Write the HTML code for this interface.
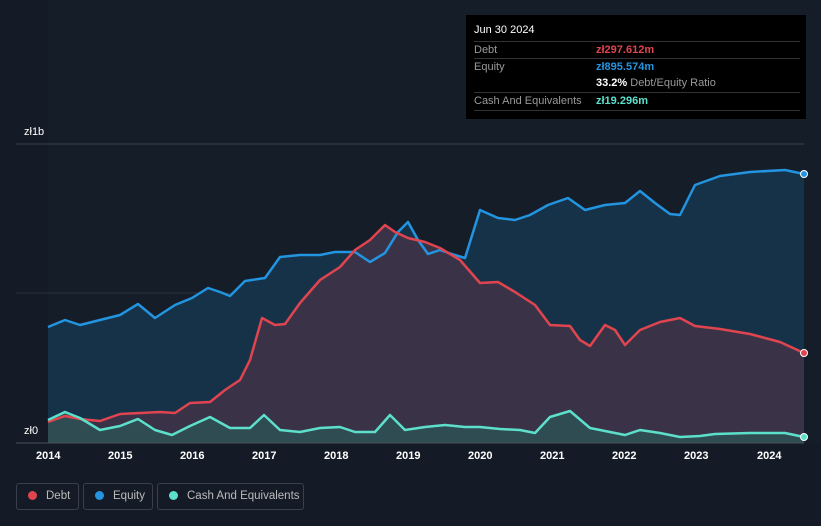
<!DOCTYPE html>
<html><head><meta charset="utf-8"><style>
html,body{margin:0;background:#151b26;font-family:"Liberation Sans",sans-serif;width:821px;height:526px;overflow:hidden;position:relative}
.tt{position:absolute;left:466px;top:15px;width:340px;height:104px;background:#000;color:#fff;font-size:11px}
.row{position:absolute;left:8px;width:326px;border-top:1px solid #333;height:17px;line-height:17px}
.lb{color:#9a9a9a;position:absolute;left:0}
.v{position:absolute;left:122px;font-weight:bold}
.leg{position:absolute;top:483px;height:27px;border:1px solid #3a404b;border-radius:3px;color:#bbb;font-size:11.5px;line-height:25px;box-sizing:border-box;white-space:nowrap;overflow:hidden}
.dot{display:inline-block;width:9px;height:9px;border-radius:50%;margin:0 9px 0 11px;vertical-align:-1px}
.ax{position:absolute;top:450px;color:#fff;font-size:11px;font-weight:bold}
</style></head><body>
<svg width="821" height="526" style="position:absolute;left:0;top:0">
<rect x="48" y="0" width="773" height="443" fill="#151d29"/>
<line x1="16" y1="144" x2="804" y2="144" stroke="#3a404a"/>
<line x1="16" y1="293" x2="804" y2="293" stroke="#2c323c"/>
<path fill="#163249" d="M48,327 L65,320 80,325 100,320 120,315 138,304 155,318 175,305 192,298 208,288 220,292 230,296 245,281 265,278 280,257 300,255 320,255 335,252 355,252 370,262 385,253 398,232 408,222 418,240 428,254 440,250 455,255 465,258 480,210 498,218 515,220 530,215 548,205 568,198 585,210 605,205 625,203 640,191 655,203 670,214 680,215 695,185 720,176 750,172 785,170 804,174 L804,443 L48,443Z"/>
<path fill="#3a3348" d="M48,422 L65,416 80,419 100,421 120,414 140,413 160,412 175,413 190,403 210,402 225,390 240,380 250,360 262,318 275,325 285,324 300,303 320,280 340,267 355,250 370,240 385,225 395,232 408,238 425,242 440,248 460,260 480,283 498,282 515,292 535,305 550,325 570,326 580,340 590,346 605,325 615,330 625,345 640,330 660,322 680,318 695,326 720,329 750,334 780,342 804,353 L804,443 L48,443Z"/>
<path fill="#2f4c52" d="M48,420 L65,412 80,418 100,430 120,426 138,419 155,430 172,435 190,426 210,417 230,428 250,428 264,415 280,430 300,432 320,428 340,427 355,432 375,432 390,415 405,430 425,427 445,425 465,427 480,427 500,429 520,430 535,433 550,417 570,411 590,428 610,432 625,435 640,430 660,433 680,437 700,436 715,434 750,433 785,433 804,437 L804,443 L48,443Z"/>
<g fill="none" stroke-width="2.5" stroke-linejoin="round">
<path stroke="#2394e0" d="M48,327 L65,320 80,325 100,320 120,315 138,304 155,318 175,305 192,298 208,288 220,292 230,296 245,281 265,278 280,257 300,255 320,255 335,252 355,252 370,262 385,253 398,232 408,222 418,240 428,254 440,250 455,255 465,258 480,210 498,218 515,220 530,215 548,205 568,198 585,210 605,205 625,203 640,191 655,203 670,214 680,215 695,185 720,176 750,172 785,170 804,174"/>
<path stroke="#e0454f" d="M48,422 L65,416 80,419 100,421 120,414 140,413 160,412 175,413 190,403 210,402 225,390 240,380 250,360 262,318 275,325 285,324 300,303 320,280 340,267 355,250 370,240 385,225 395,232 408,238 425,242 440,248 460,260 480,283 498,282 515,292 535,305 550,325 570,326 580,340 590,346 605,325 615,330 625,345 640,330 660,322 680,318 695,326 720,329 750,334 780,342 804,353"/>
<path stroke="#5de0cb" d="M48,420 L65,412 80,418 100,430 120,426 138,419 155,430 172,435 190,426 210,417 230,428 250,428 264,415 280,430 300,432 320,428 340,427 355,432 375,432 390,415 405,430 425,427 445,425 465,427 480,427 500,429 520,430 535,433 550,417 570,411 590,428 610,432 625,435 640,430 660,433 680,437 700,436 715,434 750,433 785,433 804,437"/>
</g>
<line x1="16" y1="443" x2="804" y2="443" stroke="#4a505a"/>
<circle cx="804" cy="174" r="3.5" fill="#2394e0" stroke="#fff"/>
<circle cx="804" cy="353" r="3.5" fill="#e0454f" stroke="#fff"/>
<circle cx="804" cy="437" r="3.5" fill="#5de0cb" stroke="#fff"/>
</svg>
<div style="position:absolute;left:24px;top:126px;color:#fff;font-size:11px">zł1b</div>
<div style="position:absolute;left:24px;top:425px;color:#fff;font-size:11px">zł0</div>
<div class="ax" style="left:36px">2014</div><div class="ax" style="left:108px">2015</div><div class="ax" style="left:180px">2016</div><div class="ax" style="left:252px">2017</div><div class="ax" style="left:324px">2018</div><div class="ax" style="left:396px">2019</div><div class="ax" style="left:468px">2020</div><div class="ax" style="left:540px">2021</div><div class="ax" style="left:612px">2022</div><div class="ax" style="left:684px">2023</div><div class="ax" style="left:757px">2024</div>
<div class="tt">
<div style="position:absolute;left:8px;top:9px;font-size:11px">Jun 30 2024</div>
<div class="row" style="top:26px"><span class="lb">Debt</span><span class="v" style="color:#e0454f">zł297.612m</span></div>
<div class="row" style="top:43px"><span class="lb">Equity</span><span class="v" style="color:#2394e0">zł895.574m</span></div>
<div class="row" style="top:60px;border-top:none"><span class="v" style="color:#fff">33.2% <span style="color:#9a9a9a;font-weight:normal">Debt/Equity Ratio</span></span></div>
<div class="row" style="top:77px"><span class="lb">Cash And Equivalents</span><span class="v" style="color:#5de0cb">zł19.296m</span></div>
<div class="row" style="top:95px;height:0"></div>
</div>
<div class="leg" style="left:16px;width:63px"><span class="dot" style="background:#e0454f"></span>Debt</div>
<div class="leg" style="left:83px;width:70px"><span class="dot" style="background:#2394e0"></span>Equity</div>
<div class="leg" style="left:157px;width:147px"><span class="dot" style="background:#5de0cb"></span>Cash And Equivalents</div>
</body></html>
